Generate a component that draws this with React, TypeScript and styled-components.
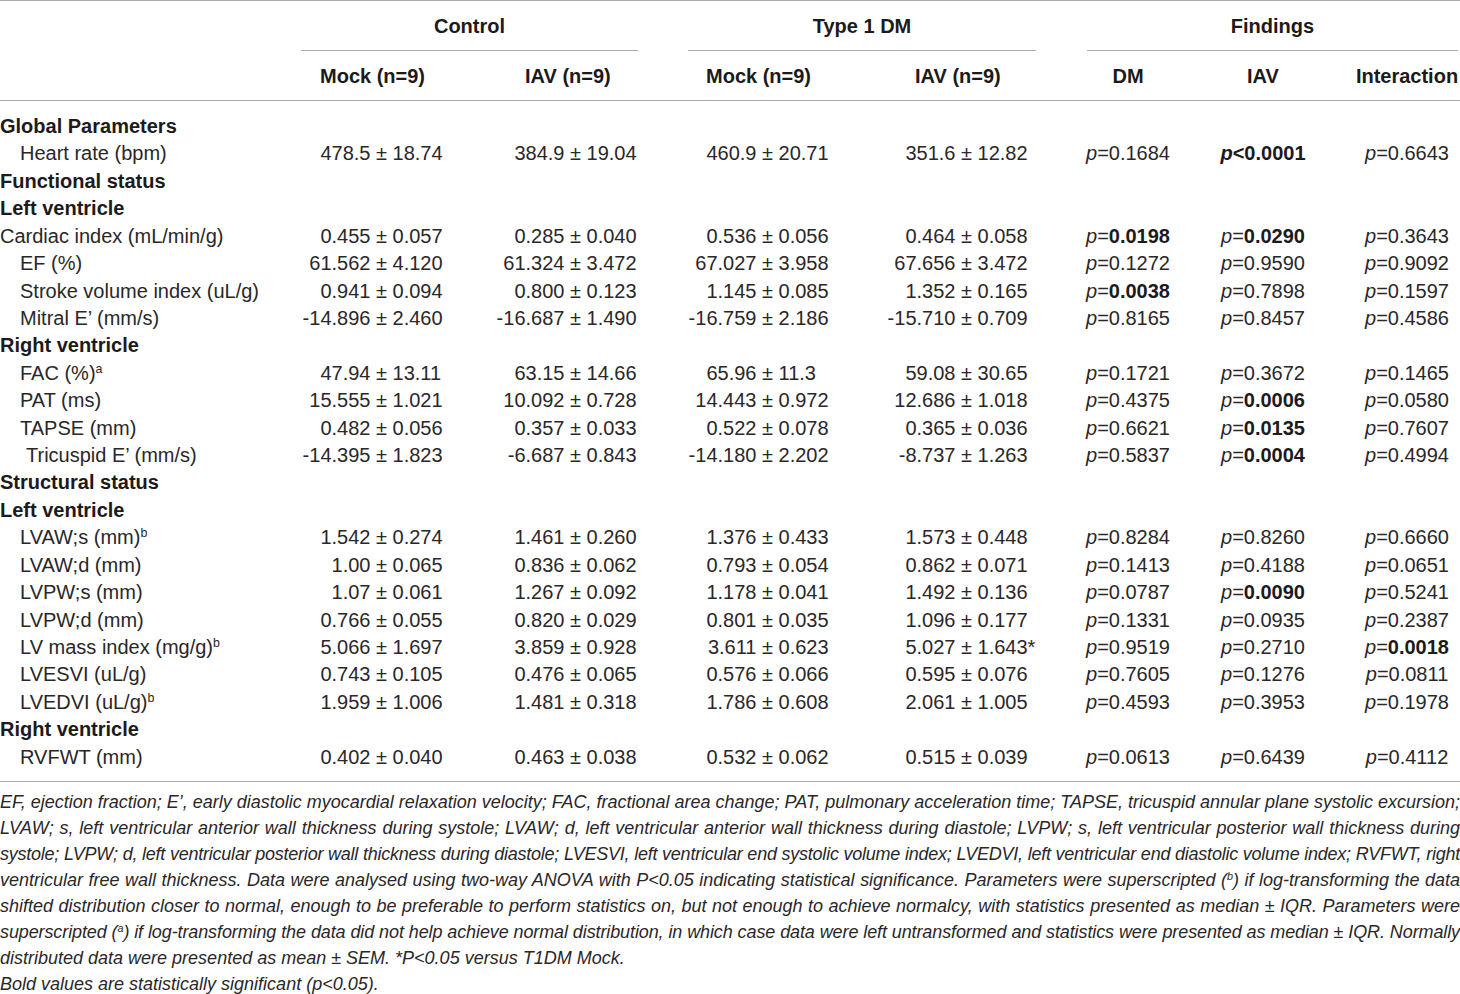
import React, { useLayoutEffect, useRef, useState } from 'react';
import styled, { createGlobalStyle } from 'styled-components';

const COLS = '300px 170px 192px 200px 198px 136px 134px 130px';
const INK = '#2a2728';
const RULE = '#a9abad';

const Global = createGlobalStyle`
  html, body { margin: 0; padding: 0; background: #fff; }
  body {
    font-family: "Liberation Sans", Arial, Helvetica, sans-serif;
    color: ${INK};
    -webkit-font-smoothing: antialiased;
  }
`;

const Page = styled.div`
  width: 1460px;
`;

const Table = styled.div`
  border-top: 1.5px solid ${RULE};
`;

const GroupRow = styled.div`
  display: grid;
  grid-template-columns: ${COLS};
  height: 50px;
`;

const GroupHead = styled.div<{ $col: string; $ml: number; $mr: number }>`
  grid-column: ${(p) => p.$col};
  margin-left: ${(p) => p.$ml}px;
  margin-right: ${(p) => p.$mr}px;
  border-bottom: 1.5px solid ${RULE};
  text-align: center;
  font-weight: 700;
  font-size: 20px;
  line-height: 23px;
  padding-top: 14px;
  color: #1d1a1b;
`;

const HeadRow = styled.div`
  display: grid;
  grid-template-columns: ${COLS};
  height: 50px;
  border-bottom: 1.5px solid ${RULE};
  box-sizing: border-box;
`;

const SubHead = styled.div<{ $indent?: number; $center?: boolean }>`
  font-weight: 700;
  font-size: 20px;
  line-height: 23px;
  padding-top: 14px;
  padding-left: ${(p) => p.$indent ?? 0}px;
  text-align: ${(p) => (p.$center ? 'center' : 'left')};
  white-space: nowrap;
  color: #1d1a1b;
`;

const Body = styled.div`
  padding: 12px 0 10px;
  border-bottom: 1.5px solid ${RULE};
`;

const Row = styled.div`
  display: grid;
  grid-template-columns: ${COLS};
  height: 27.43px;
  font-size: 20px;
  line-height: 27.43px;
  white-space: nowrap;
`;

const Label = styled.div<{ $indent: number; $bold?: boolean }>`
  padding-left: ${(p) => p.$indent}px;
  font-weight: ${(p) => (p.$bold ? 700 : 400)};
  color: ${(p) => (p.$bold ? '#1d1a1b' : INK)};
`;

const Sup = styled.sup`
  font-size: 0.62em;
  line-height: 0;
  vertical-align: 0.55em;
`;

const ValueCell = styled.div<{ $pm: number }>`
  display: grid;
  grid-template-columns: ${(p) => p.$pm}px auto;
`;

const Mean = styled.span`
  text-align: right;
  padding-right: 0.278em;
`;

const Spread = styled.span``;

const FindCell = styled.div<{ $indent?: number }>`
  text-align: center;
  padding-left: ${(p) => p.$indent ?? 0}px;
`;

const Ital = styled.i`
  font-style: italic;
`;

const Strong = styled.b`
  font-weight: 700;
  color: #1d1a1b;
`;

const Notes = styled.div`
  padding-top: 7px;
  font-size: 18px;
  line-height: 26px;
  font-style: italic;
`;

const NoteLine = styled.div<{ $justify?: boolean }>`
  white-space: nowrap;
  text-align: ${(p) => (p.$justify ? 'justify' : 'left')};
  text-align-last: ${(p) => (p.$justify ? 'justify' : 'left')};
`;

const NoteSup = styled.sup`
  font-size: 0.6em;
  line-height: 0;
  vertical-align: 0.6em;
`;

type Line = { justify: boolean; content: React.ReactNode };

const FitLine: React.FC<{ justify: boolean; children: React.ReactNode }> = ({ justify, children }) => {
  const ref = useRef<HTMLDivElement>(null);
  const inner = useRef<HTMLSpanElement>(null);
  const [ls, setLs] = useState(0);
  useLayoutEffect(() => {
    if (!ref.current || !inner.current) return;
    const avail = ref.current.clientWidth;
    const natural = inner.current.getBoundingClientRect().width;
    const chars = (inner.current.textContent || '').length;
    if (natural > avail - 2 && chars > 0) {
      setLs((avail - 2 - natural) / chars);
    }
  }, []);
  return (
    <NoteLine ref={ref} $justify={justify} style={ls ? { letterSpacing: `${ls}px` } : undefined}>
      <span ref={inner}>{children}</span>
    </NoteLine>
  );
};

type Val = [string, string];
type DataRow = {
  kind: 'data';
  label: React.ReactNode;
  indent: number;
  vals: [Val, Val, Val, Val];
  p: [string, string, string];
  sig: [boolean, boolean, boolean];
};
type SectionRow = { kind: 'section'; label: string };
type AnyRow = DataRow | SectionRow;

const sec = (label: string): SectionRow => ({ kind: 'section', label });
const dat = (
  label: React.ReactNode,
  indent: number,
  vals: string[],
  p: string[],
  sig: boolean[] = [false, false, false]
): DataRow => ({
  kind: 'data',
  label,
  indent,
  vals: vals.map((v) => {
    const [a, b] = v.split(' ± ');
    return [a, b] as Val;
  }) as [Val, Val, Val, Val],
  p: p as [string, string, string],
  sig: sig as [boolean, boolean, boolean],
});

const ROWS: AnyRow[] = [
  sec('Global Parameters'),
  dat('Heart rate (bpm)', 20, ['478.5 ± 18.74', '384.9 ± 19.04', '460.9 ± 20.71', '351.6 ± 12.82'], ['=0.1684', '<0.0001', '=0.6643'], [false, true, false]),
  sec('Functional status'),
  sec('Left ventricle'),
  dat('Cardiac index (mL/min/g)', 0, ['0.455 ± 0.057', '0.285 ± 0.040', '0.536 ± 0.056', '0.464 ± 0.058'], ['=0.0198', '=0.0290', '=0.3643'], [true, true, false]),
  dat('EF (%)', 20, ['61.562 ± 4.120', '61.324 ± 3.472', '67.027 ± 3.958', '67.656 ± 3.472'], ['=0.1272', '=0.9590', '=0.9092']),
  dat('Stroke volume index (uL/g)', 20, ['0.941 ± 0.094', '0.800 ± 0.123', '1.145 ± 0.085', '1.352 ± 0.165'], ['=0.0038', '=0.7898', '=0.1597'], [true, false, false]),
  dat('Mitral E’ (mm/s)', 20, ['-14.896 ± 2.460', '-16.687 ± 1.490', '-16.759 ± 2.186', '-15.710 ± 0.709'], ['=0.8165', '=0.8457', '=0.4586']),
  sec('Right ventricle'),
  dat(<>FAC (%)<Sup>a</Sup></>, 20, ['47.94 ± 13.11', '63.15 ± 14.66', '65.96 ± 11.3', '59.08 ± 30.65'], ['=0.1721', '=0.3672', '=0.1465']),
  dat('PAT (ms)', 20, ['15.555 ± 1.021', '10.092 ± 0.728', '14.443 ± 0.972', '12.686 ± 1.018'], ['=0.4375', '=0.0006', '=0.0580'], [false, true, false]),
  dat('TAPSE (mm)', 20, ['0.482 ± 0.056', '0.357 ± 0.033', '0.522 ± 0.078', '0.365 ± 0.036'], ['=0.6621', '=0.0135', '=0.7607'], [false, true, false]),
  dat('Tricuspid E’ (mm/s)', 26, ['-14.395 ± 1.823', '-6.687 ± 0.843', '-14.180 ± 2.202', '-8.737 ± 1.263'], ['=0.5837', '=0.0004', '=0.4994'], [false, true, false]),
  sec('Structural status'),
  sec('Left ventricle'),
  dat(<>LVAW;s (mm)<Sup>b</Sup></>, 20, ['1.542 ± 0.274', '1.461 ± 0.260', '1.376 ± 0.433', '1.573 ± 0.448'], ['=0.8284', '=0.8260', '=0.6660']),
  dat('LVAW;d (mm)', 20, ['1.00 ± 0.065', '0.836 ± 0.062', '0.793 ± 0.054', '0.862 ± 0.071'], ['=0.1413', '=0.4188', '=0.0651']),
  dat('LVPW;s (mm)', 20, ['1.07 ± 0.061', '1.267 ± 0.092', '1.178 ± 0.041', '1.492 ± 0.136'], ['=0.0787', '=0.0090', '=0.5241'], [false, true, false]),
  dat('LVPW;d (mm)', 20, ['0.766 ± 0.055', '0.820 ± 0.029', '0.801 ± 0.035', '1.096 ± 0.177'], ['=0.1331', '=0.0935', '=0.2387']),
  dat(<>LV mass index (mg/g)<Sup>b</Sup></>, 20, ['5.066 ± 1.697', '3.859 ± 0.928', '3.611 ± 0.623', '5.027 ± 1.643*'], ['=0.9519', '=0.2710', '=0.0018'], [false, false, true]),
  dat('LVESVI (uL/g)', 20, ['0.743 ± 0.105', '0.476 ± 0.065', '0.576 ± 0.066', '0.595 ± 0.076'], ['=0.7605', '=0.1276', '=0.0811']),
  dat(<>LVEDVI (uL/g)<Sup>b</Sup></>, 20, ['1.959 ± 1.006', '1.481 ± 0.318', '1.786 ± 0.608', '2.061 ± 1.005'], ['=0.4593', '=0.3953', '=0.1978']),
  sec('Right ventricle'),
  dat('RVFWT (mm)', 20, ['0.402 ± 0.040', '0.463 ± 0.038', '0.532 ± 0.062', '0.515 ± 0.039'], ['=0.0613', '=0.6439', '=0.4112']),
];

const PM_OFFSETS = [76, 100, 100, 99];
const FIND_INDENT = [0, 0, 24];

const PValue: React.FC<{ text: string; sig: boolean }> = ({ text, sig }) => {
  const op = text[0];
  const num = text.slice(1);
  if (sig && op === '<') {
    return (
      <Strong>
        <Ital>p</Ital>
        {op}
        {num}
      </Strong>
    );
  }
  return (
    <>
      <Ital>p</Ital>
      {op}
      {sig ? <Strong>{num}</Strong> : num}
    </>
  );
};

const NOTES: Line[] = [
  {
    justify: true,
    content:
      'EF, ejection fraction; E’, early diastolic myocardial relaxation velocity; FAC, fractional area change; PAT, pulmonary acceleration time; TAPSE, tricuspid annular plane systolic excursion;',
  },
  {
    justify: true,
    content:
      'LVAW; s, left ventricular anterior wall thickness during systole; LVAW; d, left ventricular anterior wall thickness during diastole; LVPW; s, left ventricular posterior wall thickness during',
  },
  {
    justify: true,
    content:
      'systole; LVPW; d, left ventricular posterior wall thickness during diastole; LVESVI, left ventricular end systolic volume index; LVEDVI, left ventricular end diastolic volume index; RVFWT, right',
  },
  {
    justify: true,
    content: (
      <>
        ventricular free wall thickness. Data were analysed using two-way ANOVA with P&lt;0.05 indicating statistical
        significance. Parameters were superscripted (<NoteSup>b</NoteSup>) if log-transforming the data
      </>
    ),
  },
  {
    justify: true,
    content:
      'shifted distribution closer to normal, enough to be preferable to perform statistics on, but not enough to achieve normalcy, with statistics presented as median ± IQR. Parameters were',
  },
  {
    justify: true,
    content: (
      <>
        superscripted (<NoteSup>a</NoteSup>) if log-transforming the data did not help achieve normal distribution, in
        which case data were left untransformed and statistics were presented as median ± IQR. Normally
      </>
    ),
  },
  { justify: false, content: 'distributed data were presented as mean ± SEM. *P<0.05 versus T1DM Mock.' },
  { justify: false, content: 'Bold values are statistically significant (p<0.05).' },
];

export default function App() {
  return (
    <Page>
      <Global />
      <Table>
        <GroupRow>
          <GroupHead $col="2 / span 2" $ml={1} $mr={24}>
            Control
          </GroupHead>
          <GroupHead $col="4 / span 2" $ml={26} $mr={24}>
            Type 1 DM
          </GroupHead>
          <GroupHead $col="6 / span 3" $ml={27} $mr={2}>
            Findings
          </GroupHead>
        </GroupRow>
        <HeadRow>
          <SubHead />
          <SubHead $indent={20}>Mock (n=9)</SubHead>
          <SubHead $indent={55}>IAV (n=9)</SubHead>
          <SubHead $indent={44}>Mock (n=9)</SubHead>
          <SubHead $indent={53}>IAV (n=9)</SubHead>
          <SubHead $center>DM</SubHead>
          <SubHead $center>IAV</SubHead>
          <SubHead $center $indent={24}>
            Interaction
          </SubHead>
        </HeadRow>
        <Body>
          {ROWS.map((r, i) =>
            r.kind === 'section' ? (
              <Row key={i}>
                <Label $indent={0} $bold>
                  {r.label}
                </Label>
              </Row>
            ) : (
              <Row key={i}>
                <Label $indent={r.indent}>{r.label}</Label>
                {r.vals.map((v, j) => (
                  <ValueCell key={j} $pm={PM_OFFSETS[j]}>
                    <Mean>{v[0]}</Mean>
                    <Spread>± {v[1]}</Spread>
                  </ValueCell>
                ))}
                {r.p.map((pv, j) => (
                  <FindCell key={j} $indent={FIND_INDENT[j]}>
                    <PValue text={pv} sig={r.sig[j]} />
                  </FindCell>
                ))}
              </Row>
            )
          )}
        </Body>
      </Table>
      <Notes>
        {NOTES.map((n, i) => (
          <FitLine key={i} justify={n.justify}>
            {n.content}
          </FitLine>
        ))}
      </Notes>
    </Page>
  );
}
